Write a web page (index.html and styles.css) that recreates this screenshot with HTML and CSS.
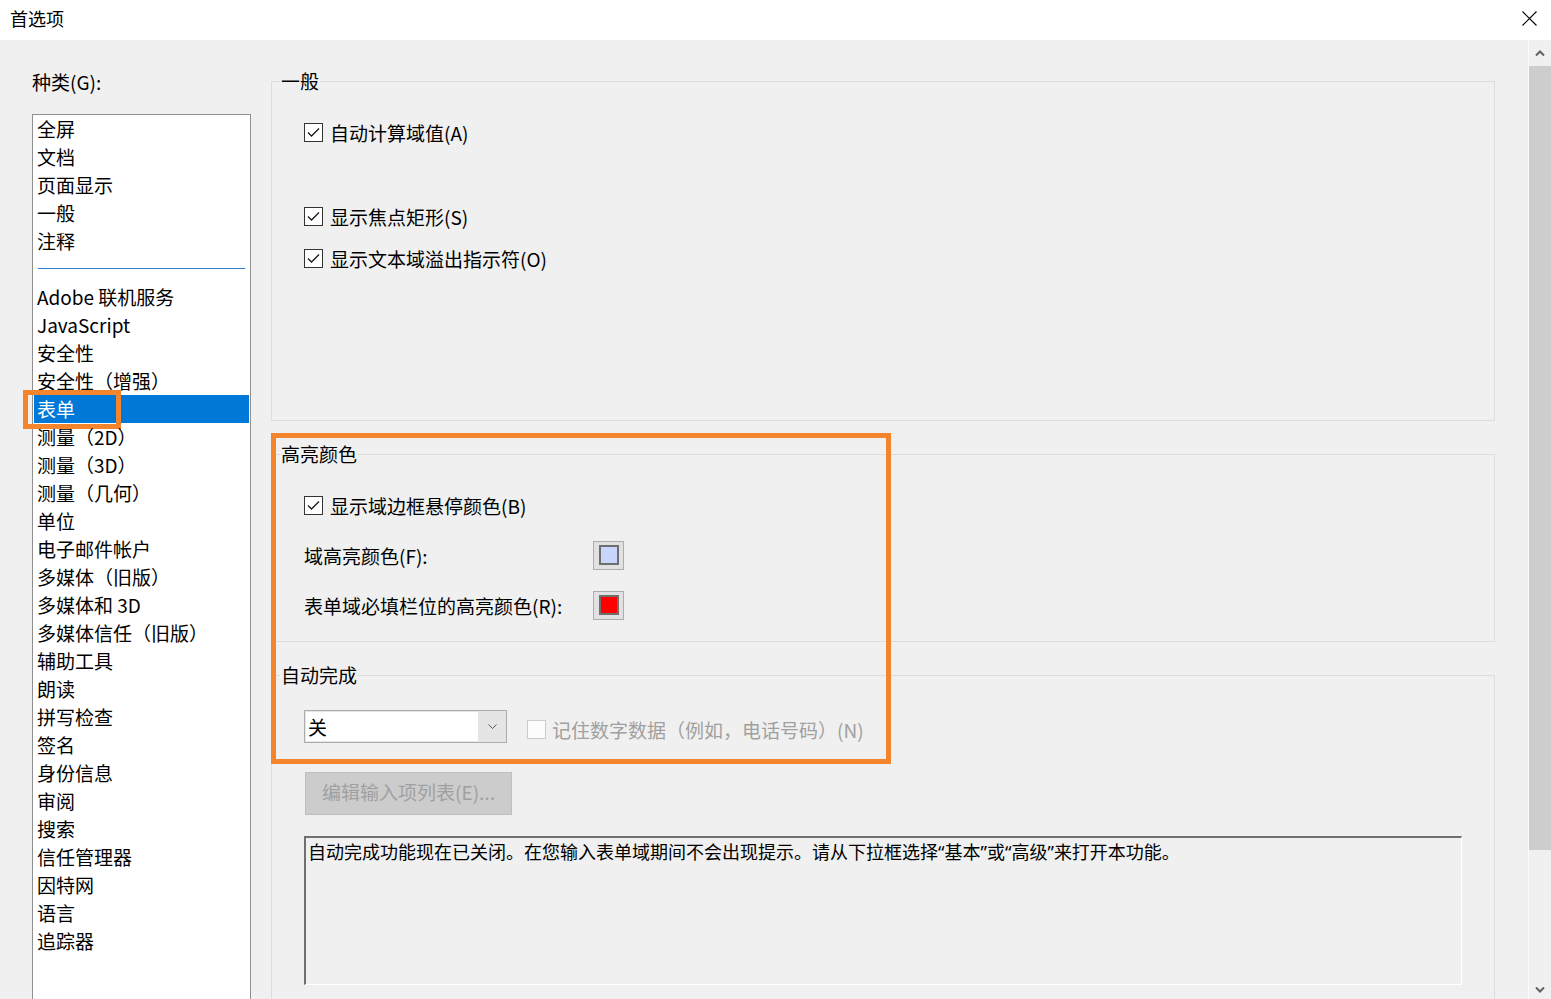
FILE: index.html
```html
<!DOCTYPE html>
<html lang="zh-CN">
<head>
<meta charset="utf-8">
<title>首选项</title>
<link rel="stylesheet" href="styles.css">
</head>
<body>
<div class="window">
  <header class="titlebar">
    <span class="title">首选项</span>
    <button class="close" type="button" aria-label="关闭">
      <svg width="15" height="15" viewBox="0 0 15 15"><path d="M0.5 0.5 L14.5 14.5 M14.5 0.5 L0.5 14.5" stroke="#000" stroke-width="1.1" fill="none"/></svg>
    </button>
  </header>
  <div class="main">
    <aside class="sidebar">
      <div class="cat-label">种类(G):</div>
      <ul class="list">
        <li>全屏</li>
        <li>文档</li>
        <li>页面显示</li>
        <li>一般</li>
        <li>注释</li>
        <li class="sep"></li>
        <li>Adobe 联机服务</li>
        <li>JavaScript</li>
        <li>安全性</li>
        <li>安全性（增强）</li>
        <li class="selected">表单<span class="annot annot-small"></span></li>
        <li>测量（2D）</li>
        <li>测量（3D）</li>
        <li>测量（几何）</li>
        <li>单位</li>
        <li>电子邮件帐户</li>
        <li>多媒体（旧版）</li>
        <li>多媒体和 3D</li>
        <li>多媒体信任（旧版）</li>
        <li>辅助工具</li>
        <li>朗读</li>
        <li>拼写检查</li>
        <li>签名</li>
        <li>身份信息</li>
        <li>审阅</li>
        <li>搜索</li>
        <li>信任管理器</li>
        <li>因特网</li>
        <li>语言</li>
        <li>追踪器</li>
      </ul>
    </aside>

    <section class="content">
      <fieldset class="group">
        <legend>一般</legend>
        <div class="general-body">
          <label class="check-row"><span class="cb"><svg width="17" height="17" viewBox="0 0 17 17"><path d="M3 8.5 L6.5 12 L14 4.5" fill="none" stroke="#1a1a1a" stroke-width="1.3"/></svg></span><span>自动计算域值(A)</span></label>
          <div class="check-row"></div>
          <label class="check-row"><span class="cb"><svg width="17" height="17" viewBox="0 0 17 17"><path d="M3 8.5 L6.5 12 L14 4.5" fill="none" stroke="#1a1a1a" stroke-width="1.3"/></svg></span><span>显示焦点矩形(S)</span></label>
          <label class="check-row"><span class="cb"><svg width="17" height="17" viewBox="0 0 17 17"><path d="M3 8.5 L6.5 12 L14 4.5" fill="none" stroke="#1a1a1a" stroke-width="1.3"/></svg></span><span>显示文本域溢出指示符(O)</span></label>
        </div>
      </fieldset>

      <fieldset class="group">
        <legend>高亮颜色</legend>
        <div class="highlight-body">
          <label class="check-row"><span class="cb"><svg width="17" height="17" viewBox="0 0 17 17"><path d="M3 8.5 L6.5 12 L14 4.5" fill="none" stroke="#1a1a1a" stroke-width="1.3"/></svg></span><span>显示域边框悬停颜色(B)</span></label>
          <div class="color-row"><span>域高亮颜色(F):</span><button class="swatch" type="button"><span class="swatch-fill swatch-blue"></span></button></div>
          <div class="color-row"><span>表单域必填栏位的高亮颜色(R):</span><button class="swatch" type="button"><span class="swatch-fill swatch-red"></span></button></div>
        </div>
      </fieldset>

      <fieldset class="group">
        <legend>自动完成</legend>
        <div class="auto-body">
          <div class="auto-row">
            <div class="select">
              <span class="select-value">关</span>
              <span class="select-arrow"><svg width="9" height="5" viewBox="0 0 9 5"><path d="M0.5 0.5 L4.5 4.5 L8.5 0.5" fill="none" stroke="#555" stroke-width="1"/></svg></span>
            </div>
            <label class="check-row auto-check"><span class="cb cb-disabled"></span><span>记住数字数据（例如，电话号码）(N)</span></label>
          </div>
          <button class="btn" type="button" disabled>编辑输入项列表(E)...</button>
          <div class="desc">自动完成功能现在已关闭。在您输入表单域期间不会出现提示。请从下拉框选择<span class="q">“</span>基本<span class="q">”</span>或<span class="q">“</span>高级<span class="q">”</span>来打开本功能。</div>
        </div>
      </fieldset>

      <div class="annot annot-big"></div>
    </section>

    <div class="scrollbar">
      <div class="sb-btn"><svg width="10" height="6" viewBox="0 0 10 6"><path d="M1 5.5 L5 1.5 L9 5.5" fill="none" stroke="#606060" stroke-width="2"/></svg></div>
      <div class="sb-track"><div class="sb-thumb"></div></div>
      <div class="sb-btn sb-down"><svg width="10" height="6" viewBox="0 0 10 6"><path d="M1 0.5 L5 4.5 L9 0.5" fill="none" stroke="#606060" stroke-width="2"/></svg></div>
    </div>
  </div>
</div>
</body>
</html>
```

FILE: styles.css
```css
* { box-sizing: border-box; }
html, body { margin: 0; padding: 0; }
body {
  width: 1551px;
  height: 999px;
  overflow: hidden;
  background: #f0f0f0;
  color: #000;
  font-family: "Noto Sans CJK SC", "Noto Sans", sans-serif;
  font-size: 19px;
}
.window { display: flex; flex-direction: column; height: 999px; }

.titlebar {
  flex: none;
  height: 40px;
  background: #fff;
  display: flex;
  justify-content: space-between;
  align-items: flex-start;
  padding-left: 10px;
}
.title { font-size: 18px; line-height: 36px; }
.close {
  width: 44px;
  height: 36px;
  border: none;
  background: transparent;
  padding: 0;
  display: flex;
  align-items: center;
  justify-content: center;
}

.main { flex: 1; display: flex; min-height: 0; }

.sidebar { flex: none; width: 271px; padding: 30px 0 0 32px; }
.cat-label { line-height: 24px; }
.list {
  list-style: none;
  margin: 20px 0 0;
  padding: 0;
  width: 219px;
  height: 900px;
  background: #fff;
  border: 1px solid #8f8f8f;
}
.list li {
  position: relative;
  height: 28px;
  line-height: 28px;
  margin: 0 1px;
  padding-left: 3px;
  white-space: nowrap;
}
.list li.selected { background: #0078d7; color: #fff; }
.list li.sep { padding: 13px 4px 0; }
.list li.sep::after {
  content: "";
  display: block;
  height: 1px;
  background: #2f7fd0;
}

.content { flex: 1; position: relative; min-width: 0; padding: 29px 33px 0 0; }

.group {
  margin: 0;
  padding: 0;
  border: 1px solid #dcdcdc;
  min-width: 0;
}
.group + .group { margin-top: 21px; }
.group legend {
  margin-left: 8px;
  padding: 0 1px;
  line-height: 24px;
  font-size: 19px;
}

.general-body { height: 327px; padding: 18px 32px 0; }
.check-row { display: flex; align-items: center; height: 42px; }
.cb {
  flex: none;
  width: 19px;
  height: 19px;
  margin-right: 7px;
  border: 1px solid #333;
  background: #fff;
  display: flex;
}
.cb-disabled { border-color: #cccccc; background: #fcfcfc; margin-right: 6px; }

.highlight-body {
  height: 175px;
  padding: 24px 32px 0;
  display: flex;
  flex-direction: column;
  gap: 20px;
}
.highlight-body .check-row { height: 30px; }
.color-row {
  display: grid;
  grid-template-columns: 289px 31px;
  align-items: center;
  height: 30px;
}
.swatch {
  width: 31px;
  height: 29px;
  padding: 0;
  border: 1px solid #adadad;
  background: #e1e1e1;
  display: flex;
  align-items: center;
  justify-content: center;
}
.swatch-fill { width: 20px; height: 20px; border: 2px solid #6e6e6e; }
.swatch-blue { background: #c9d5fb; }
.swatch-red { background: #ff0000; }

.auto-body { padding: 23px 32px 40px; }
.auto-row { display: flex; align-items: flex-start; height: 33px; }
.select {
  flex: none;
  width: 203px;
  height: 33px;
  display: flex;
  padding: 1px 0 1px 1px;
  border: 1px solid #adadad;
  background: #e5e5e5;
}
.select-value { width: 172px; background: #fff; line-height: 29px; padding-left: 2px; }
.select-arrow { flex: 1; display: flex; align-items: center; justify-content: center; }
.auto-check { height: 28px; margin: 5px 0 0 20px; color: #a0a0a0; }

.btn {
  display: block;
  width: 207px;
  height: 43px;
  margin: 29px 0 0 1px;
  padding: 0 0 3px;
  border: 1px solid #bfbfbf;
  background: #cccccc;
  color: #a0a0a0;
  font-family: inherit;
  font-size: 19px;
  line-height: 24px;
}

.desc {
  width: 1158px;
  height: 149px;
  margin-top: 21px;
  padding: 1px 2px;
  border-style: solid;
  border-width: 2px 1px 1px 2px;
  border-color: #707070 #ffffff #ffffff #707070;
  font-size: 18px;
  line-height: 24px;
  white-space: nowrap;
}
.q { font-family: "Noto Sans", sans-serif; }

.annot { position: absolute; border: 5px solid #f5852c; pointer-events: none; }
.annot-big { left: 0; top: 393px; width: 620px; height: 331px; }
.annot-small { left: -11px; top: -5px; width: 98px; height: 39px; }

.scrollbar {
  flex: none;
  width: 23px;
  display: flex;
  flex-direction: column;
  border-left: 1px solid #fbfbfb;
  background: #f0f0f0;
}
.sb-btn { flex: none; height: 26px; display: flex; align-items: center; justify-content: center; }
.sb-down { height: 18px; }
.sb-track { flex: 1; }
.sb-thumb { height: 784px; background: #cdcdcd; }
```
